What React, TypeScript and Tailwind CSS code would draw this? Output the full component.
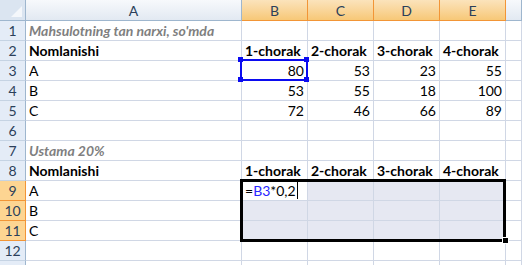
import React from 'react';

type CellKind = 'plain' | 'bold' | 'note' | 'num';
type Cell = { text?: string; kind?: CellKind };

const COLS = ['A', 'B', 'C', 'D', 'E', ''];
const QUARTERS = ['1-chorak', '2-chorak', '3-chorak', '4-chorak'];

const head = (label: string): Cell[] => [
  { text: label, kind: 'bold' },
  ...QUARTERS.map((q) => ({ text: q, kind: 'bold' as CellKind })),
];
const nums = (name: string, values: number[]): Cell[] => [
  { text: name },
  ...values.map((v) => ({ text: String(v), kind: 'num' as CellKind })),
];

const ROWS: Cell[][] = [
  [{ text: "Mahsulotning tan narxi, so'mda", kind: 'note' }],
  head('Nomlanishi'),
  nums('A', [80, 53, 23, 55]),
  nums('B', [53, 55, 18, 100]),
  nums('C', [72, 46, 66, 89]),
  [],
  [{ text: 'Ustama 20%', kind: 'note' }],
  head('Nomlanishi'),
  [{ text: 'A' }],
  [{ text: 'B' }],
  [{ text: 'C' }],
  [],
];

const selectedCol = (c: number) => c >= 1 && c <= 4;
const selectedRow = (r: number) => r >= 9 && r <= 11;
const inRange = (r: number, c: number) => selectedRow(r) && selectedCol(c);

const kindClass: Record<CellKind, string> = {
  plain: 'justify-start pl-[3px] text-black',
  bold: 'justify-start pl-[3px] font-bold text-black',
  note: 'justify-start pl-[3px] font-bold italic text-[#7f7f7f]',
  num: 'justify-end pr-[3px] text-black',
};

function ColumnHeader({ label, index }: { label: string; index: number }) {
  const on = selectedCol(index);
  return (
    <div
      className={
        'flex h-[21px] items-center justify-center border-r border-b text-[14px] text-[#2b3f5a] ' +
        (on
          ? 'border-[#f29536] bg-gradient-to-b from-[#fbe3bb] to-[#f7c877]'
          : 'border-[#9eb6ce] bg-gradient-to-b from-[#f7f9fc] to-[#e2e9f2]')
      }
    >
      {label}
    </div>
  );
}

function RowHeader({ n, label = true }: { n: number; label?: boolean }) {
  const on = selectedRow(n);
  return (
    <div
      className={
        'flex h-[20px] items-center justify-center border-r border-b text-[14px] leading-none text-[#2b3f5a] ' +
        (on
          ? 'border-[#f29536] bg-[#fdd592]'
          : 'border-r-[#9eb6ce] border-b-[#c5d3e3] bg-[#e4ecf7]')
      }
    >
      {label ? n : null}
    </div>
  );
}

function Formula() {
  return (
    <span className="flex items-center">
      =<span className="text-[#2727ff]">B3</span>*0,2
      <span className="ml-[1px] inline-block h-[17px] w-px bg-black" />
    </span>
  );
}

export default function App() {
  return (
    <div className="relative h-[265px] w-[522px] overflow-hidden bg-white font-['Lato','Liberation_Sans',sans-serif] text-[14px]">
      <div className="grid grid-cols-[26px_216px_66px_66px_66px_66px_1fr]">
        {/* corner */}
        <div className="relative h-[21px] border-r border-b border-[#9eb6ce] bg-[#dbe5f1]">
          <div className="absolute right-[3px] bottom-[3px] h-0 w-0 border-b-[11px] border-l-[11px] border-b-[#f4f7fb] border-l-transparent" />
        </div>
        {COLS.map((c, i) => (
          <ColumnHeader key={i} label={c} index={i} />
        ))}

        {ROWS.map((cells, ri) => {
          const r = ri + 1;
          return (
            <React.Fragment key={r}>
              <RowHeader n={r} />
              {COLS.map((_, ci) => {
                const cell = cells[ci];
                const shaded = inRange(r, ci) && !(r === 9 && ci === 1);
                return (
                  <div
                    key={ci}
                    className={
                      'flex h-[20px] items-end whitespace-nowrap border-r border-b border-[#d0d7e5] pb-[1px] leading-[17px] ' +
                      kindClass[cell?.kind ?? 'plain'] +
                      (shaded ? ' bg-[#e6e8f2]' : ' bg-white')
                    }
                  >
                    {r === 9 && ci === 1 ? <Formula /> : cell?.text}
                  </div>
                );
              })}
            </React.Fragment>
          );
        })}

        {/* row 13, only its top edge shows */}
        <RowHeader n={13} label={false} />
        {COLS.map((_, ci) => (
          <div key={ci} className="h-[20px] border-r border-[#d0d7e5] bg-white" />
        ))}
      </div>

      {/* reference box around B3 while editing */}
      <div className="pointer-events-none absolute top-[59px] left-[240px] h-[22px] w-[68px] border-2 border-[#0b0bf0]" />
      {[
        'top-[57px] left-[238px]',
        'top-[57px] left-[304px]',
        'top-[77px] left-[238px]',
        'top-[77px] left-[304px]',
      ].map((pos) => (
        <div key={pos} className={'absolute h-[5px] w-[5px] bg-[#0b0bf0] ' + pos} />
      ))}

      {/* selected range B9:E11 */}
      <div className="pointer-events-none absolute top-[179px] left-[240px] h-[63px] w-[266px] border-[3px] border-black" />
      <div className="absolute top-[237px] left-[502px] h-[7px] w-[7px] border border-white bg-black" />
    </div>
  );
}
